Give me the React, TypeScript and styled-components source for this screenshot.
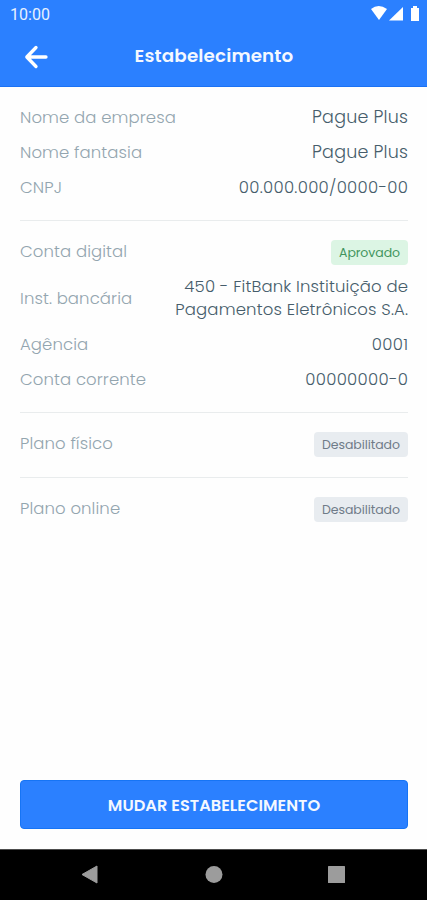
import React from "react";
import styled, { createGlobalStyle } from "styled-components";

const GlobalStyle = createGlobalStyle`
  * { box-sizing: border-box; }
  body {
    margin: 0;
    background: #fefefe;
    font-family: Poppins, Inter, "Liberation Sans", sans-serif;
  }
`;

const Screen = styled.div`
  width: 100%;
  height: 900px;
  display: flex;
  flex-direction: column;
  overflow: hidden;
  background: #fefefe;
`;

const StatusBar = styled.div`
  height: 28px;
  flex: none;
  display: flex;
  align-items: center;
  justify-content: space-between;
  padding: 0 7px 0 10px;
  background: #2b80ff;
  color: #e6f0ff;
`;

const Clock = styled.span`
  font: 400 16px/28px Roboto, sans-serif;
  letter-spacing: 0.05px;
  padding-top: 1px;
`;

const StatusIcons = styled.svg`
  display: block;
  width: 50px;
  height: 28px;
  fill: #fff;
`;

const Header = styled.header`
  height: 59px;
  flex: none;
  display: grid;
  grid-template-columns: 72px 1fr 72px;
  align-items: center;
  background: #2b80ff;
  border-bottom: 1px solid #1b72f4;
`;

const BackButton = styled.button`
  width: 24px;
  height: 24px;
  margin-left: 24px;
  padding: 0;
  border: 0;
  background: none;
  svg { display: block; }
`;

const Title = styled.h1`
  margin: 0 0 3px;
  padding-left: 1px;
  text-align: center;
  color: #f4f8ff;
  font-size: 18.3px;
  line-height: 26px;
  font-weight: 600;
  letter-spacing: 0.15px;
`;

const Content = styled.main`
  flex: 1;
  padding: 0 19px 0 20px;
`;

const Section = styled.section<{ $compact?: boolean; $last?: boolean }>`
  padding: 13px 0 ${(p) => (p.$compact ? 16 : 15)}px;
  border-bottom: ${(p) => (p.$last ? "0" : "1px solid #e9eced")};
`;

const Row = styled.div<{ $tall?: boolean }>`
  height: ${(p) => (p.$tall ? 58 : 35)}px;
  display: flex;
  align-items: center;
  justify-content: space-between;
`;

const Label = styled.span`
  color: #93a5af;
  font-size: 16.5px;
  line-height: 23px;
  font-weight: 300;
  letter-spacing: 0.1px;
  white-space: nowrap;
`;

const Value = styled.span<{ $track: number; $size?: number }>`
  display: block;
  color: #465d6b;
  font-size: ${(p) => p.$size ?? 16.5}px;
  line-height: 23px;
  font-weight: 300;
  text-align: right;
  letter-spacing: ${(p) => p.$track}px;
  margin-right: ${(p) => -p.$track}px;
  white-space: nowrap;
`;

const Badge = styled.span<{ $tone: "green" | "gray" }>`
  height: 25px;
  width: ${(p) => (p.$tone === "green" ? 77 : 94)}px;
  margin-top: 2px;
  border-radius: 4px;
  text-align: center;
  font-size: 12.5px;
  line-height: 25px;
  font-weight: 400;
  letter-spacing: -0.07px;
  color: ${(p) => (p.$tone === "green" ? "#43955e" : "#6f7b88")};
  background: ${(p) => (p.$tone === "green" ? "#dcf5e4" : "#e8ecf0")};
`;

const Footer = styled.div`
  flex: none;
  padding: 0 19px 20px 20px;
`;

const PrimaryButton = styled.button`
  display: block;
  width: 100%;
  height: 49px;
  padding: 1px 0 0;
  border: 1px solid #1674f5;
  border-radius: 4px;
  background: #2b80ff;
  color: #f4f8ff;
  font-family: inherit;
  font-size: 16.2px;
  font-weight: 600;
  letter-spacing: 0.03px;
`;

const NavBar = styled.nav`
  height: 51px;
  flex: none;
  background: #000;
  border-top: 1px solid #4d4d4d;
  svg { display: block; fill: #9c9c9c; }
`;

interface Field {
  label: string;
  lines?: { text: string; track: number; size?: number }[];
  badge?: { text: string; tone: "green" | "gray" };
}

const sections: Field[][] = [
  [
    { label: "Nome da empresa", lines: [{ text: "Pague Plus", track: 0.2, size: 17.5 }] },
    { label: "Nome fantasia", lines: [{ text: "Pague Plus", track: 0.2, size: 17.5 }] },
    { label: "CNPJ", lines: [{ text: "00.000.000/0000-00", track: 0.3 }] },
  ],
  [
    { label: "Conta digital", badge: { text: "Aprovado", tone: "green" } },
    {
      label: "Inst. bancária",
      lines: [
        { text: "450 - FitBank Instituição de", track: 0.14 },
        { text: "Pagamentos Eletrônicos S.A.", track: 0.16 },
      ],
    },
    { label: "Agência", lines: [{ text: "0001", track: 0.3 }] },
    { label: "Conta corrente", lines: [{ text: "00000000-0", track: 0.3 }] },
  ],
  [{ label: "Plano físico", badge: { text: "Desabilitado", tone: "gray" } }],
  [{ label: "Plano online", badge: { text: "Desabilitado", tone: "gray" } }],
];

export default function App() {
  return (
    <Screen>
      <GlobalStyle />
      <StatusBar>
        <Clock>10:00</Clock>
        <StatusIcons viewBox="0 0 50 28">
          <path d="M1 9Q8.500 3 17 9L9 20Z" />
          <path d="M19 20.500L33 7V20.500Z" />
          <path d="M41 8H43V6H47V8H49V21H41Z" />
        </StatusIcons>
      </StatusBar>
      <Header>
        <BackButton aria-label="Voltar">
          <svg width="24" height="24" viewBox="0 0 24 24" fill="none" stroke="#fff" strokeWidth="3.300" strokeLinecap="round" strokeLinejoin="round">
            <path d="M22 12H3.500M12 2.500L2.800 12L12 21.500" />
          </svg>
        </BackButton>
        <Title>Estabelecimento</Title>
      </Header>
      <Content>
        {sections.map((fields, i) => (
          <Section key={i} $compact={fields.length === 1} $last={i === sections.length - 1}>
            {fields.map((f) => (
              <Row key={f.label} $tall={(f.lines?.length ?? 0) > 1}>
                <Label>{f.label}</Label>
                {f.badge && <Badge $tone={f.badge.tone}>{f.badge.text}</Badge>}
                {f.lines && (
                  <div>
                    {f.lines.map((l) => (
                      <Value key={l.text} $track={l.track} $size={l.size}>{l.text}</Value>
                    ))}
                  </div>
                )}
              </Row>
            ))}
          </Section>
        ))}
      </Content>
      <Footer>
        <PrimaryButton>MUDAR ESTABELECIMENTO</PrimaryButton>
      </Footer>
      <NavBar>
        <svg width="427" height="50" viewBox="0 850 427 50">
          <path d="M82 874.500L97 866V883Z" stroke="#9c9c9c" strokeLinejoin="round" />
          <circle cx="214" cy="874.500" r="8.500" />
          <rect x="328" y="866" width="17" height="17" rx="0.500" />
        </svg>
      </NavBar>
    </Screen>
  );
}
